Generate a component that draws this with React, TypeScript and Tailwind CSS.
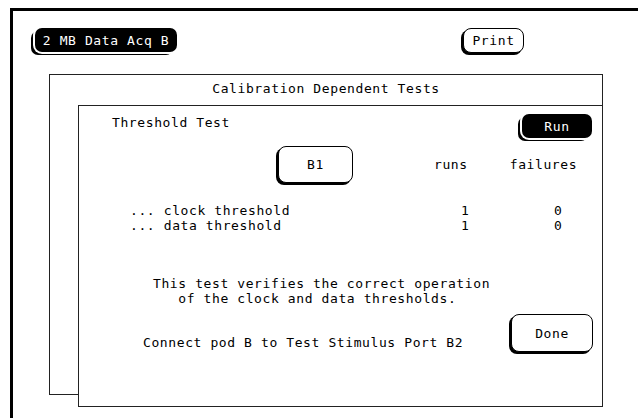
const mono = "font-['DejaVu_Sans_Mono',monospace] text-[13px] leading-[15px] tracking-[0.6px]";

function DarkButton({ label, className }: { label: string; className: string }) {
  return (
    <div
      className={`flex items-center justify-center bg-black text-white rounded-[7px] shadow-[0_0_0_2px_#fff,-4px_3px_0_0_#000] ${className}`}
    >
      {label}
    </div>
  );
}

function LightButton({ label, className }: { label: string; className: string }) {
  return (
    <div
      className={`flex items-center justify-center bg-white text-black border border-black rounded-[8px] shadow-[-2px_2px_0_0_#000] ${className}`}
    >
      {label}
    </div>
  );
}

export default function App() {
  return (
    <div className={`w-[638px] h-[418px] bg-white text-black overflow-hidden ${mono}`}>
      <div className="ml-[10px] mt-[8px] h-[410px] border-t-[3px] border-l-[3px] border-black">
        {/* top bar */}
        <div className="flex items-start pt-[17px] pl-[22px]">
          <DarkButton label="2 MB Data Acq B" className="w-[142px] h-[24px]" />
          <LightButton label="Print" className="ml-[286px] w-[61px] h-[25px]" />
        </div>

        {/* outer dialog */}
        <div className="mt-[21px] ml-[36px] w-[554px] h-[321px] border border-[#222] bg-white">
          <div className="pt-[6px] text-center">Calibration Dependent Tests</div>

          {/* inner dialog */}
          <div className="mt-[9px] ml-[28px] w-[525px] h-[302px] border border-[#222] bg-white">
            <div className="flex items-start pt-[8px]">
              <span className="pl-[33px] mt-[1px]">Threshold Test</span>
              <DarkButton label="Run" className="ml-auto mr-[10px] w-[70px] h-[24px]" />
            </div>

            <div className="flex items-center mt-[8px]">
              <LightButton label="B1" className="ml-[199px] w-[75px] h-[37px]" />
              <span className="ml-[81px]">runs</span>
              <span className="ml-[42px]">failures</span>
            </div>

            <div className="mt-[20px] pl-[51px]">
              <div className="flex">
                <span className="w-[331px] whitespace-pre">... clock threshold</span>
                <span className="w-[93px]">1</span>
                <span>0</span>
              </div>
              <div className="flex">
                <span className="w-[331px] whitespace-pre">... data threshold</span>
                <span className="w-[93px]">1</span>
                <span>0</span>
              </div>
            </div>

            <div className="mt-[43px] pl-[74px] whitespace-pre">
              <div>This test verifies the correct operation</div>
              <div>{"   of the clock and data thresholds."}</div>
            </div>

            <div className="flex items-start mt-[8px]">
              <span className="pl-[64px] mt-[21px]">Connect pod B to Test Stimulus Port B2</span>
              <LightButton label="Done" className="ml-auto mr-[9px] w-[82px] h-[38px]" />
            </div>
          </div>
        </div>
      </div>
    </div>
  );
}
